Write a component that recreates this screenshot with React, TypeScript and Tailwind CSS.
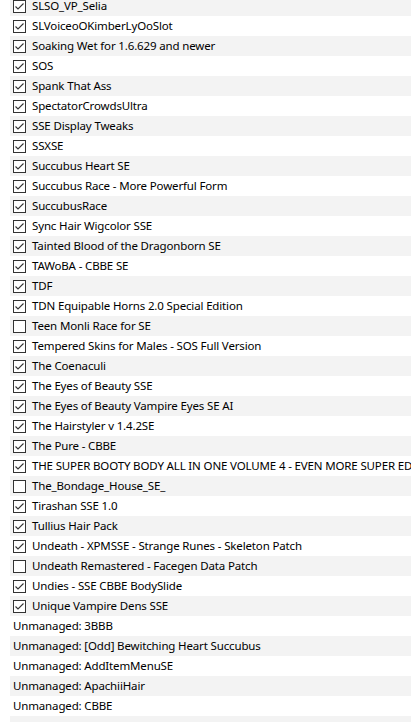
const rows: { name: string; checked?: boolean; unmanaged?: boolean }[] = [
  { name: "SLSO_VP_Selia", checked: true },
  { name: "SLVoiceoOKimberLyOoSlot", checked: true },
  { name: "Soaking Wet for 1.6.629 and newer", checked: true },
  { name: "SOS", checked: true },
  { name: "Spank That Ass", checked: true },
  { name: "SpectatorCrowdsUltra", checked: true },
  { name: "SSE Display Tweaks", checked: true },
  { name: "SSXSE", checked: true },
  { name: "Succubus Heart SE", checked: true },
  { name: "Succubus Race - More Powerful Form", checked: true },
  { name: "SuccubusRace", checked: true },
  { name: "Sync Hair Wigcolor SSE", checked: true },
  { name: "Tainted Blood of the Dragonborn SE", checked: true },
  { name: "TAWoBA - CBBE SE", checked: true },
  { name: "TDF", checked: true },
  { name: "TDN Equipable Horns 2.0 Special Edition", checked: true },
  { name: "Teen Monli Race for SE", checked: false },
  { name: "Tempered Skins for Males - SOS Full Version", checked: true },
  { name: "The Coenaculi", checked: true },
  { name: "The Eyes of Beauty SSE", checked: true },
  { name: "The Eyes of Beauty Vampire Eyes SE AI", checked: true },
  { name: "The Hairstyler v 1.4.2SE", checked: true },
  { name: "The Pure - CBBE", checked: true },
  { name: "THE SUPER BOOTY BODY ALL IN ONE VOLUME 4 - EVEN MORE SUPER EDITION", checked: true },
  { name: "The_Bondage_House_SE_", checked: false },
  { name: "Tirashan SSE 1.0", checked: true },
  { name: "Tullius Hair Pack", checked: true },
  { name: "Undeath - XPMSSE - Strange Runes - Skeleton Patch", checked: true },
  { name: "Undeath Remastered - Facegen Data Patch", checked: false },
  { name: "Undies - SSE CBBE BodySlide", checked: true },
  { name: "Unique Vampire Dens SSE", checked: true },
  { name: "Unmanaged: 3BBB", unmanaged: true },
  { name: "Unmanaged: [Odd] Bewitching Heart Succubus", unmanaged: true },
  { name: "Unmanaged: AddItemMenuSE", unmanaged: true },
  { name: "Unmanaged: ApachiiHair", unmanaged: true },
  { name: "Unmanaged: CBBE", unmanaged: true },
  { name: "", unmanaged: true },
];

function CheckBox({ checked }: { checked?: boolean }) {
  return (
    <div className="w-[13px] h-[13px] shrink-0 border border-[#333333] bg-white flex items-center justify-center">
      {checked && (
        <svg width="11" height="11" viewBox="0 0 11 11">
          <polyline points="1.5,5.5 4,8 9.5,2.5" fill="none" stroke="#333333" strokeWidth="1.1" />
        </svg>
      )}
    </div>
  );
}

export default function App() {
  return (
    <div className="w-[411px] h-[722px] overflow-hidden bg-white">
      <div className="-mt-[4px] pl-[10px] flex flex-col">
        {rows.map((r, i) => (
          <div
            key={i}
            className={`h-5 flex items-center whitespace-nowrap overflow-hidden ${i % 2 === 0 ? "bg-[#f3f3f3]" : "bg-white"}`}
            style={{ fontFamily: '"Noto Sans", "Open Sans", sans-serif' }}
          >
            {r.unmanaged ? (
              <span className="pl-[3px] text-[11.5px] tracking-[-0.15px] text-black leading-none">{r.name}</span>
            ) : (
              <>
                <div className="ml-[3px]">
                  <CheckBox checked={r.checked} />
                </div>
                <span className="pl-[6px] text-[11.5px] tracking-[-0.15px] text-black leading-none">{r.name}</span>
              </>
            )}
          </div>
        ))}
      </div>
    </div>
  );
}
